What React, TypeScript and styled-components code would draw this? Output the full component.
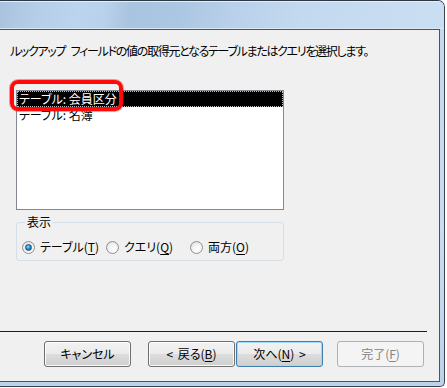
import React from "react";
import styled, { createGlobalStyle } from "styled-components";

const Global = createGlobalStyle`
  html, body { margin: 0; padding: 0; background: #ffffff; }
  body { font-family: "Noto Sans CJK JP", "Noto Sans", sans-serif; }
`;

const Window = styled.div`
  box-sizing: border-box;
  width: 445px;
  height: 387px;
  display: flex;
  flex-direction: column;
  border-top: 1px solid #2d3845;
  border-right: 1px solid #3a4656;
  border-bottom: 1px solid #3a4656;
  border-top-right-radius: 7px;
  border-bottom-right-radius: 5px;
  padding: 0 4px 4px 0;
  background: linear-gradient(180deg, #c4d8ee 0%, #c9dcf0 60%, #bcd2ea 100%);
  overflow: hidden;
`;

const TitleBar = styled.div`
  height: 28px;
  flex: none;
  box-sizing: border-box;
  margin-right: -4px;
  border-top: 1px solid #e6eef7;
  border-bottom: 1px solid #dce8f4;
  background: linear-gradient(
    100deg,
    #a9c3de 0px,
    #b6cfe9 40px,
    #bcd5ee 80px,
    #b9d2ec 105px,
    #a9c4df 130px,
    #acc7e2 180px,
    #b8d0ea 230px,
    #c3d9ef 300px,
    #cbdff2 447px
  );
`;

const Client = styled.div`
  flex: 1;
  position: relative;
  box-sizing: border-box;
  background: #f0f0f0;
  border-top: 1px solid #4a5564;
  border-right: 1px solid #4a5564;
  border-bottom: 1px solid #4a5564;
  display: flex;
  flex-direction: column;
  font-size: 12px;
  line-height: 16px;
  color: #000;
  font-feature-settings: "palt";
`;

const Instruction = styled.p`
  margin: 13px 0 0 10px;
  white-space: nowrap;
  letter-spacing: -1.3px;
  word-spacing: 4px;
`;

const ListWrap = styled.div`
  position: relative;
  margin: 31px 0 0 16px;
  width: 268px;
`;

const ListBox = styled.div`
  box-sizing: border-box;
  height: 120px;
  background: #ffffff;
  border: 1px solid #828790;
  display: flex;
  flex-direction: column;
`;

const ListRow = styled.div<{ $selected?: boolean }>`
  height: 16px;
  line-height: 16px;
  padding-left: 2px;
  white-space: nowrap;
  background: ${(p) => (p.$selected ? "#000000" : "transparent")};
  color: ${(p) => (p.$selected ? "#ffffff" : "#000000")};
  outline: ${(p) => (p.$selected ? "1px dotted #bdbdbd" : "none")};
  outline-offset: -1px;
`;

const Highlight = styled.div`
  position: absolute;
  left: -6px;
  top: -10px;
  width: 113px;
  height: 31px;
  box-sizing: border-box;
  border: 4px solid #ff0a0a;
  border-radius: 8px;
  box-shadow: 0 0 0 1px rgba(200, 0, 0, 0.35);
  pointer-events: none;
`;

const Group = styled.fieldset`
  margin: 4px 0 0 16px;
  width: 268px;
  box-sizing: border-box;
  padding: 0 0 5px 5px;
  border: 1px solid #d5dfe5;
  border-radius: 3px;
  min-width: 0;
`;

const Legend = styled.legend`
  margin-left: 3px;
  padding: 0 2px;
  line-height: 16px;
`;

const RadioRow = styled.div`
  display: grid;
  grid-template-columns: 84px 84px 84px;
  margin-top: 9px;
`;

const RadioItem = styled.label`
  display: flex;
  align-items: center;
  gap: 5px;
  height: 16px;
  white-space: nowrap;
`;

const RadioDot = styled.span<{ $checked?: boolean }>`
  width: 13px;
  height: 13px;
  flex: none;
  box-sizing: border-box;
  border-radius: 50%;
  border: 1px solid #8e8f8f;
  background: radial-gradient(circle at 60% 65%, #ffffff 0%, #f4f4f4 45%, #d4d4d4 100%);
  display: flex;
  align-items: center;
  justify-content: center;
  &::after {
    content: "";
    display: ${(p) => (p.$checked ? "block" : "none")};
    width: 7px;
    height: 7px;
    border-radius: 50%;
    background: radial-gradient(circle at 40% 35%, #9ad8ff 0%, #2d8fd6 45%, #0c4f8c 100%);
    border: 0.5px solid #1b4f78;
    box-sizing: border-box;
  }
`;

const Accel = styled.span`
  text-decoration: underline;
  text-underline-offset: 2px;
`;

const Separator = styled.div`
  margin-top: 70px;
  width: 427px;
  height: 1px;
  background: #1e1e1e;
`;

const ButtonRow = styled.div`
  display: flex;
  margin-top: 9px;
  padding-left: 44px;
`;

const Button = styled.button<{ $gap?: number; $default?: boolean }>`
  box-sizing: border-box;
  width: 87px;
  height: 26px;
  margin: 0 0 0 ${(p) => p.$gap ?? 0}px;
  padding: 0;
  font-family: "Noto Sans CJK JP", "Noto Sans", sans-serif;
  font-size: 12px;
  line-height: 16px;
  font-feature-settings: "palt";
  word-spacing: 2px;
  color: #000;
  border-radius: 3px;
  border: 1px solid ${(p) => (p.$default ? "#3c7fb1" : "#707070")};
  background: linear-gradient(180deg, #f2f2f2 0%, #ebebeb 49%, #dddddd 50%, #cfcfcf 100%);
  box-shadow: inset 0 0 0 1px ${(p) => (p.$default ? "#9fdbf8" : "#fbfbfb")};
  &:disabled {
    color: #838383;
    border-color: #adb2b5;
    background: #f4f4f4;
    box-shadow: none;
  }
`;

export default function App() {
  return (
    <>
      <Global />
      <Window>
        <TitleBar />
        <Client>
          <Instruction>
            ルックアップ フィールドの値の取得元となるテーブルまたはクエリを選択します。
          </Instruction>
          <ListWrap>
            <ListBox>
              <ListRow $selected>テーブル: 会員区分</ListRow>
              <ListRow>テーブル: 名簿</ListRow>
            </ListBox>
            <Highlight />
          </ListWrap>
          <Group>
            <Legend>表示</Legend>
            <RadioRow>
              <RadioItem>
                <RadioDot $checked />
                <span>
                  テーブル(<Accel>T</Accel>)
                </span>
              </RadioItem>
              <RadioItem>
                <RadioDot />
                <span>
                  クエリ(<Accel>Q</Accel>)
                </span>
              </RadioItem>
              <RadioItem>
                <RadioDot />
                <span>
                  両方(<Accel>O</Accel>)
                </span>
              </RadioItem>
            </RadioRow>
          </Group>
          <Separator />
          <ButtonRow>
            <Button>キャンセル</Button>
            <Button $gap={17}>
              &lt; 戻る(<Accel>B</Accel>)
            </Button>
            <Button $gap={1} $default>
              次へ(<Accel>N</Accel>) &gt;
            </Button>
            <Button $gap={14} disabled>
              完了(<Accel>F</Accel>)
            </Button>
          </ButtonRow>
        </Client>
      </Window>
    </>
  );
}
